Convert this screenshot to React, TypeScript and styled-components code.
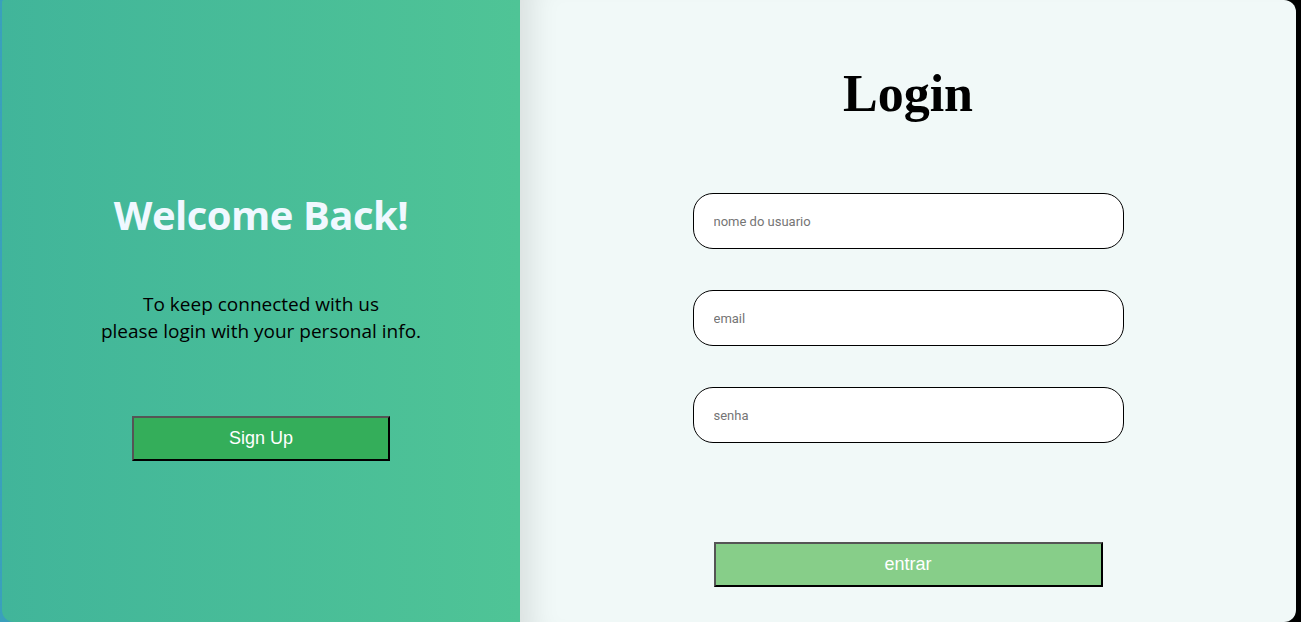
import React from "react";
import styled, { createGlobalStyle } from "styled-components";

const Global = createGlobalStyle`
  html, body { margin: 0; padding: 0; height: 100%; overflow: hidden; }
  body {
    background: linear-gradient(to right, #3aa0bc 0%, #2d7f70 50%, #0b2d22 85%, #000 100%);
  }
  #root { height: 100%; }
  * { box-sizing: border-box; }
`;

const Page = styled.div`
  height: 622px;
  padding: 0 5px 0 2px;
  display: flex;
`;

const Card = styled.div`
  flex: 1;
  display: flex;
  border-radius: 2px 12px 12px 12px;
  overflow: hidden;
`;

const LeftPanel = styled.section`
  width: 518px;
  flex-shrink: 0;
  background: linear-gradient(to right, #41b59a, #4fc496);
  display: flex;
  flex-direction: column;
  align-items: center;
  padding-top: 189px;
  font-family: "Open Sans", "Noto Sans", sans-serif;
`;

const Welcome = styled.h1`
  margin: 0;
  font-size: 40px;
  font-weight: 700;
  color: #f0f8ff;
  letter-spacing: -0.5px;
  line-height: 52px;
`;

const Message = styled.p`
  margin: 50px 0 0;
  font-size: 19px;
  line-height: 27px;
  color: #000;
  text-align: center;
`;

const Button = styled.button<{ $bg: string; $w: number }>`
  width: ${(p) => p.$w}px;
  height: 45px;
  background: ${(p) => p.$bg};
  border: 2px outset #767676;
  border-color: #555 #000 #000 #555;
  color: #fff;
  font-family: "Liberation Sans", Arial, sans-serif;
  font-size: 18px;
  cursor: pointer;
`;

const SignUpWrap = styled.div`
  margin-top: 71px;
`;

const RightPanel = styled.section`
  flex: 1;
  background: #f1f9f8;
  box-shadow: inset 34px 0 28px -22px rgba(0, 0, 0, 0.1);
  display: flex;
  flex-direction: column;
  align-items: center;
  padding-top: 62px;
`;

const Title = styled.h2`
  margin: 0;
  font-family: "Liberation Serif", "Times New Roman", serif;
  font-size: 52px;
  font-weight: 700;
  line-height: 64px;
  color: #000;
`;

const Form = styled.form`
  display: flex;
  flex-direction: column;
  align-items: center;
  gap: 41px;
  margin-top: 67px;
`;

const Input = styled.input`
  width: 431px;
  height: 56px;
  border: 1px solid #000;
  border-radius: 20px;
  background: #fff;
  padding: 0 20px;
  font-family: Roboto, "Liberation Sans", sans-serif;
  font-size: 13px;
  outline: none;
  &::placeholder { color: #757575; }
`;

const SubmitWrap = styled.div`
  margin-top: 58px;
`;

export default function App() {
  return (
    <>
      <Global />
      <Page>
        <Card>
          <LeftPanel>
            <Welcome>Welcome Back!</Welcome>
            <Message>
              To keep connected with us
              <br />
              please login with your personal info.
            </Message>
            <SignUpWrap>
              <Button $bg="#34ae5a" $w={258}>Sign Up</Button>
            </SignUpWrap>
          </LeftPanel>
          <RightPanel>
            <Title>Login</Title>
            <Form onSubmit={(e) => e.preventDefault()}>
              <Input placeholder="nome do usuario" />
              <Input placeholder="email" />
              <Input placeholder="senha" type="password" />
              <SubmitWrap>
                <Button $bg="#87ce89" $w={389} type="submit">entrar</Button>
              </SubmitWrap>
            </Form>
          </RightPanel>
        </Card>
      </Page>
    </>
  );
}
